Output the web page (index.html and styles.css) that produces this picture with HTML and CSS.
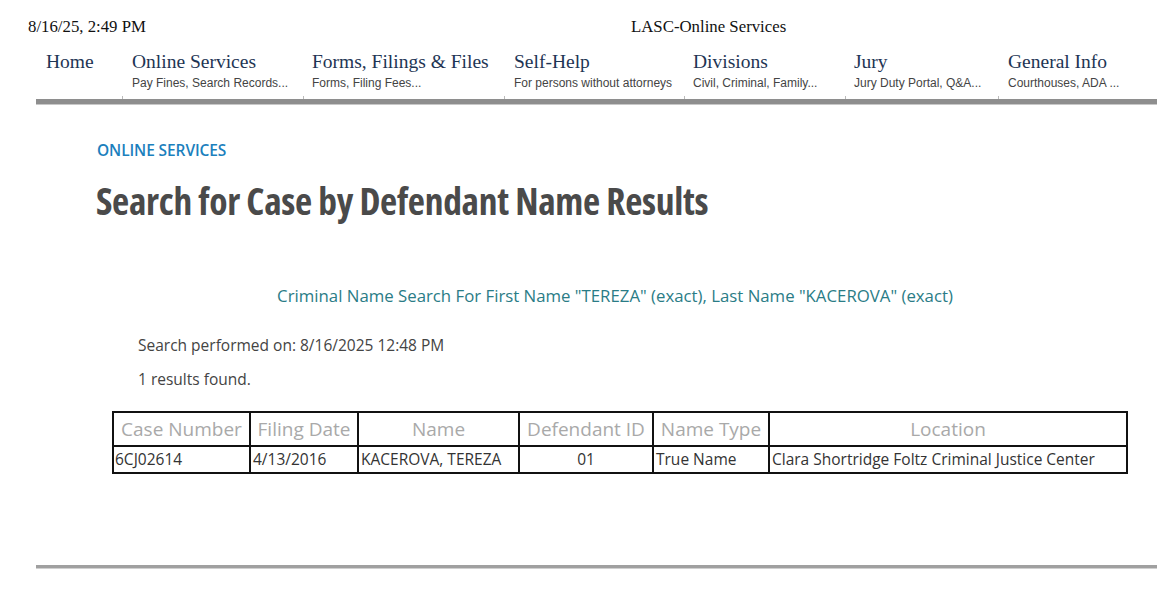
FILE: index.html
```html
<!DOCTYPE html>
<html>
<head>
<meta charset="utf-8">
<link rel="stylesheet" href="styles.css">
</head>
<body>
<header class="print-head">
  <span class="print-date">8/16/25, 2:49 PM</span>
  <span class="print-title">LASC-Online Services</span>
</header>
<nav class="nav">
  <div class="nav-item home"><div class="nav-title">Home</div><div class="nav-sub">&nbsp;</div></div>
  <div class="nav-item w-online"><div class="nav-title">Online Services</div><div class="nav-sub">Pay Fines, Search Records...</div></div>
  <div class="nav-item w-forms"><div class="nav-title">Forms, Filings &amp; Files</div><div class="nav-sub">Forms, Filing Fees...</div></div>
  <div class="nav-item w-self"><div class="nav-title">Self-Help</div><div class="nav-sub">For persons without attorneys</div></div>
  <div class="nav-item w-div"><div class="nav-title">Divisions</div><div class="nav-sub">Civil, Criminal, Family...</div></div>
  <div class="nav-item w-jury"><div class="nav-title">Jury</div><div class="nav-sub">Jury Duty Portal, Q&amp;A...</div></div>
  <div class="nav-item w-gen"><div class="nav-title">General Info</div><div class="nav-sub">Courthouses, ADA ...</div></div>
</nav>
<div class="nav-bar">
  <span class="tick t1"></span><span class="tick t2"></span><span class="tick t3"></span><span class="tick t4"></span><span class="tick t5"></span><span class="tick t6"></span>
</div>
<main class="content">
  <div class="eyebrow">ONLINE SERVICES</div>
  <h1 class="page-title">Search for Case by Defendant Name Results</h1>
  <p class="criteria">Criminal Name Search For First Name "TEREZA" (exact), Last Name "KACEROVA" (exact)</p>
  <p class="meta">Search performed on: 8/16/2025 12:48 PM</p>
  <p class="meta count">1 results found.</p>
  <table class="results">
    <thead>
      <tr>
        <th class="c1">Case Number</th>
        <th class="c2">Filing Date</th>
        <th class="c3">Name</th>
        <th class="c4">Defendant ID</th>
        <th class="c5">Name Type</th>
        <th class="c6">Location</th>
      </tr>
    </thead>
    <tbody>
      <tr>
        <td>6CJ02614</td>
        <td>4/13/2016</td>
        <td>KACEROVA, TEREZA</td>
        <td class="center">01</td>
        <td>True Name</td>
        <td>Clara Shortridge Foltz Criminal Justice Center</td>
      </tr>
    </tbody>
  </table>
</main>
<div class="footer-bar"></div>
</body>
</html>
```

FILE: styles.css
```css
html, body {
  margin: 0;
  padding: 0;
  background: #fff;
}
body {
  width: 1157px;
  height: 606px;
  overflow: hidden;
  font-family: "Open Sans", "Liberation Sans", sans-serif;
}
.print-head {
  display: flex;
  align-items: baseline;
  padding: 17px 0 0 28px;
  height: 22px;
  font-family: "Liberation Serif", serif;
  font-size: 16.8px;
  color: #111;
}
.print-date {
  width: 603px;
}
.nav {
  display: flex;
  padding: 12px 0 0 46px;
  box-sizing: border-box;
  height: 60px;
}
.nav-item {
  flex: none;
}
.home { width: 86px; }
.w-online { width: 180px; }
.w-forms { width: 202px; }
.w-self { width: 179px; }
.w-div { width: 161px; }
.w-jury { width: 154px; }
.w-gen { width: 140px; }
.nav-title {
  font-family: "Liberation Serif", serif;
  font-size: 19.5px;
  line-height: 22px;
  color: #1e3554;
}
.nav-sub {
  font-family: "Liberation Sans", sans-serif;
  font-size: 12px;
  line-height: 14px;
  margin-top: 3px;
  color: #444;
}
.nav-bar {
  position: relative;
  margin: 0 0 0 36px;
  height: 5px;
  background: #8e8e8e;
  border-bottom: 1px solid #c8c8c8;
}
.tick {
  position: absolute;
  top: -3px;
  width: 1px;
  height: 3px;
  background: #bbb;
}
.t1 { left: 86px; }
.t2 { left: 267px; }
.t3 { left: 468px; }
.t4 { left: 648px; }
.t5 { left: 809px; }
.t6 { left: 962px; }
.content {
  padding: 35px 0 0 97px;
  height: 460px;
  box-sizing: border-box;
}
.eyebrow {
  font-size: 15.5px;
  font-weight: 600;
  color: #1b80bd;
  line-height: 20px;
  letter-spacing: -0.1px;
}
.page-title {
  margin: 19px 0 0 -1px;
  font-size: 37.5px;
  line-height: 44px;
  font-weight: 700;
  font-stretch: 79%;
  color: #4a4a4a;
  letter-spacing: -0.3px;
}
.criteria {
  margin: 62px 0 0 0;
  width: 1036px;
  text-align: center;
  font-size: 16.8px;
  color: #2a7c86;
  line-height: 22px;
}
.meta {
  margin: 27px 0 0 41px;
  font-size: 15.5px;
  font-stretch: 96%;
  color: #444;
  line-height: 22px;
}
.meta.count {
  margin-top: 12px;
}
.results {
  margin: 21px 0 0 15px;
  border-collapse: separate;
  border-spacing: 0;
  border: 2px solid #111;
  width: 1016px;
  table-layout: fixed;
}
.results th, .results td {
  border-right: 2px solid #111;
  padding: 0 2px;
  white-space: nowrap;
  overflow: hidden;
}
.results th:last-child, .results td:last-child {
  border-right: none;
}
.results th {
  font-weight: 400;
  font-size: 19px;
  color: #a9a9a9;
  height: 32px;
  border-bottom: 2px solid #111;
  text-align: center;
  line-height: 32px;
}
.results td {
  font-size: 15.5px;
  color: #333;
  height: 25px;
  line-height: 25px;
  text-align: left;
}
.results td:first-child { padding-left: 1px; }
.results td.center { text-align: center; }
.c1 { width: 131px; }
.c2 { width: 102px; }
.c3 { width: 155px; }
.c4 { width: 128px; }
.c5 { width: 110px; }
.footer-bar {
  margin-left: 36px;
  height: 3px;
  background: #a0a0a0;
  border-bottom: 1px solid #d0d0d0;
}
```
